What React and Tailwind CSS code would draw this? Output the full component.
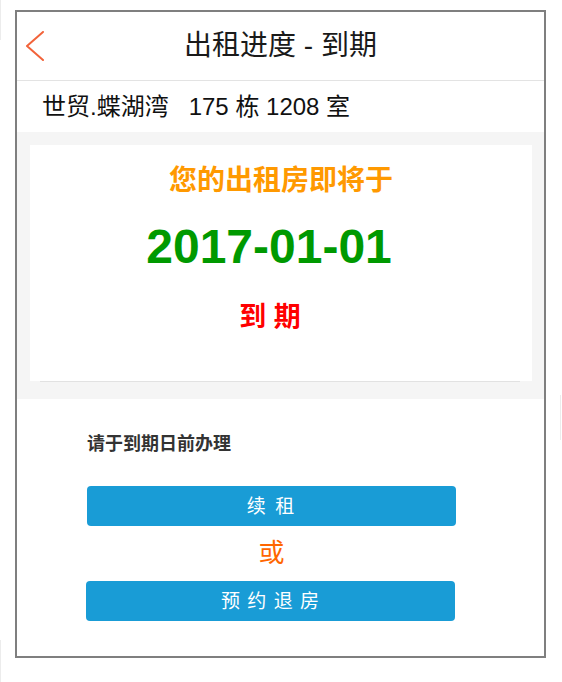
import React from "react";

const font = { fontFamily: '"Liberation Sans", "Noto Sans CJK SC", sans-serif' };

export default function App() {
  return (
    <div className="relative min-h-[682px] bg-white text-[#222]" style={font}>
      <div className="absolute left-0 top-0 w-px h-[40px] bg-[#ececec]" />
      <div className="absolute right-[1px] top-[395px] w-px h-[45px] bg-[#ececec]" />
      <div className="absolute left-0 top-[640px] w-px h-[42px] bg-[#ececec]" />
      <div className="pl-[15px] pt-[10px]">
        <div className="w-[531px] h-[648px] border-2 border-[#7f7f7f] flex flex-col bg-white">
          {/* header */}
          <div className="relative h-[69px] flex items-center justify-center border-b border-[#e3e3e3] shrink-0">
            <svg
              className="absolute left-[8px] top-[19px]"
              width="20"
              height="30"
              viewBox="0 0 20 30"
              fill="none"
            >
              <path d="M18 1 L2 15 L18 29" stroke="#f2633a" strokeWidth="2" strokeLinecap="round" strokeLinejoin="round" />
            </svg>
            <span className="text-[28px] leading-none text-[#1a1a1a]">出租进度 - 到期</span>
          </div>
          {/* address */}
          <div className="h-[51px] flex items-center pl-[25px] shrink-0">
            <span className="text-[24px] leading-none text-[#111] whitespace-pre">世贸.蝶湖湾   175 栋 1208 室</span>
          </div>
          {/* gray section */}
          <div className="bg-[#f5f5f5] pt-[13px] pl-[13px] pr-[12px] pb-[17px] shrink-0">
            <div className="bg-white h-[236px] flex flex-col items-center">
              <div className="mt-[21px] h-[30px] flex items-center text-[28px] font-bold text-[#ff9900] leading-none">
                您的出租房即将于
              </div>
              <div className="mt-[23px] h-[56px] flex items-center pr-[24px] text-[48px] font-bold text-[#009900] leading-none">
                2017-01-01
              </div>
              <div className="mt-[27px] h-[30px] flex items-center pr-[22px] text-[27px] font-bold text-[#ff0000] leading-none whitespace-pre">
                到 期
              </div>
            </div>
            <div className="h-px bg-[#e2e2e2] ml-[10px] mr-[12px]" />
          </div>
          {/* bottom */}
          <div className="pl-[70px] pt-[33px]">
            <div className="h-[24px] flex items-center text-[18px] font-bold text-[#333] leading-none">
              请于到期日前办理
            </div>
            <div className="w-[369px] mt-[30px] flex flex-col items-center">
              <button className="w-full h-[40px] rounded-[4px] bg-[#199cd6] text-white text-[19px] leading-none tracking-[2px] whitespace-pre flex items-center justify-center">
                续 租
              </button>
              <div className="mt-[12px] h-[30px] flex items-center text-[26px] text-[#ff6600] leading-none">或</div>
              <button className="-ml-[2px] mt-[13px] w-full h-[40px] rounded-[4px] bg-[#199cd6] text-white text-[19px] leading-none tracking-[1px] whitespace-pre flex items-center justify-center">
                预 约 退 房
              </button>
            </div>
          </div>
        </div>
      </div>
    </div>
  );
}
